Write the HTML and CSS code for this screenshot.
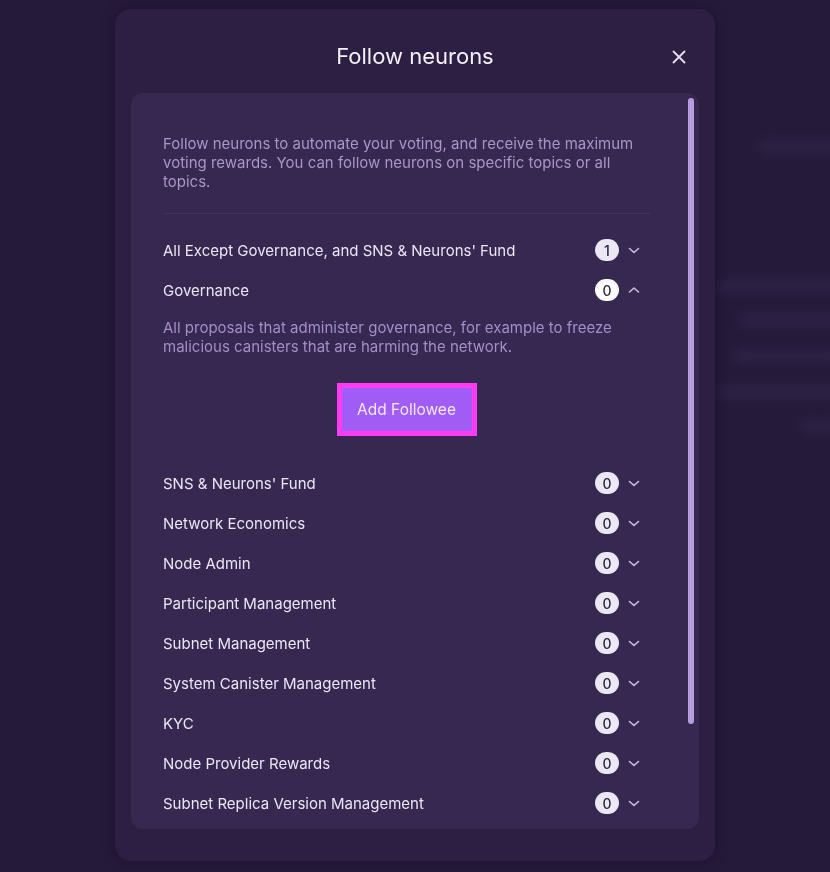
FILE: index.html
```html
<!DOCTYPE html>
<html lang="en">
<head>
<meta charset="utf-8">
<title>Follow neurons</title>
<link rel="stylesheet" href="styles.css">
</head>
<body>
<div class="backdrop" aria-hidden="true">
  <div class="ghost g1"></div>
  <div class="ghost g2"></div>
  <div class="ghost g3"></div>
  <div class="ghost g4"></div>
  <div class="ghost g5"></div>
  <div class="ghost g6"></div>
</div>
<div class="overlay">
  <section class="modal" role="dialog" aria-labelledby="modal-title">
    <header class="modal-head">
      <h2 id="modal-title" class="modal-title">Follow neurons</h2>
      <button class="close" aria-label="Close">
        <svg width="14" height="14" viewBox="0 0 14 14"><path d="M1.5 1.5 12.5 12.5M12.5 1.5 1.5 12.5" stroke="currentColor" stroke-width="1.8" stroke-linecap="round"/></svg>
      </button>
    </header>
    <div class="card">
      <div class="scroll-thumb" aria-hidden="true"></div>
      <p class="intro">Follow neurons to automate your voting, and receive the maximum voting rewards. You can follow neurons on specific topics or all topics.</p>
      <hr class="divider">
      <ul class="topics">
        <li class="topic">
          <div class="row"><span class="name">All Except Governance, and SNS &amp; Neurons' Fund</span><span class="badge">1</span><svg class="chev" width="20" height="20" viewBox="0 0 20 20"><path d="M5.5 8.5l4.5 4 4.5-4" fill="none" stroke="currentColor" stroke-width="1.6" stroke-linecap="round" stroke-linejoin="round"/></svg></div>
        </li>
        <li class="topic open">
          <div class="row"><span class="name">Governance</span><span class="badge active">0</span><svg class="chev" width="20" height="20" viewBox="0 0 20 20"><path d="M5.5 12l4.5-4 4.5 4" fill="none" stroke="currentColor" stroke-width="1.6" stroke-linecap="round" stroke-linejoin="round"/></svg></div>
          <p class="topic-desc">All proposals that administer governance, for example to freeze malicious canisters that are harming the network.</p>
          <div class="actions"><button class="primary">Add Followee</button></div>
        </li>
        <li class="topic">
          <div class="row"><span class="name">SNS &amp; Neurons' Fund</span><span class="badge">0</span><svg class="chev" width="20" height="20" viewBox="0 0 20 20"><path d="M5.5 8.5l4.5 4 4.5-4" fill="none" stroke="currentColor" stroke-width="1.6" stroke-linecap="round" stroke-linejoin="round"/></svg></div>
        </li>
        <li class="topic">
          <div class="row"><span class="name">Network Economics</span><span class="badge">0</span><svg class="chev" width="20" height="20" viewBox="0 0 20 20"><path d="M5.5 8.5l4.5 4 4.5-4" fill="none" stroke="currentColor" stroke-width="1.6" stroke-linecap="round" stroke-linejoin="round"/></svg></div>
        </li>
        <li class="topic">
          <div class="row"><span class="name">Node Admin</span><span class="badge">0</span><svg class="chev" width="20" height="20" viewBox="0 0 20 20"><path d="M5.5 8.5l4.5 4 4.5-4" fill="none" stroke="currentColor" stroke-width="1.6" stroke-linecap="round" stroke-linejoin="round"/></svg></div>
        </li>
        <li class="topic">
          <div class="row"><span class="name">Participant Management</span><span class="badge">0</span><svg class="chev" width="20" height="20" viewBox="0 0 20 20"><path d="M5.5 8.5l4.5 4 4.5-4" fill="none" stroke="currentColor" stroke-width="1.6" stroke-linecap="round" stroke-linejoin="round"/></svg></div>
        </li>
        <li class="topic">
          <div class="row"><span class="name">Subnet Management</span><span class="badge">0</span><svg class="chev" width="20" height="20" viewBox="0 0 20 20"><path d="M5.5 8.5l4.5 4 4.5-4" fill="none" stroke="currentColor" stroke-width="1.6" stroke-linecap="round" stroke-linejoin="round"/></svg></div>
        </li>
        <li class="topic">
          <div class="row"><span class="name">System Canister Management</span><span class="badge">0</span><svg class="chev" width="20" height="20" viewBox="0 0 20 20"><path d="M5.5 8.5l4.5 4 4.5-4" fill="none" stroke="currentColor" stroke-width="1.6" stroke-linecap="round" stroke-linejoin="round"/></svg></div>
        </li>
        <li class="topic">
          <div class="row"><span class="name">KYC</span><span class="badge">0</span><svg class="chev" width="20" height="20" viewBox="0 0 20 20"><path d="M5.5 8.5l4.5 4 4.5-4" fill="none" stroke="currentColor" stroke-width="1.6" stroke-linecap="round" stroke-linejoin="round"/></svg></div>
        </li>
        <li class="topic">
          <div class="row"><span class="name">Node Provider Rewards</span><span class="badge">0</span><svg class="chev" width="20" height="20" viewBox="0 0 20 20"><path d="M5.5 8.5l4.5 4 4.5-4" fill="none" stroke="currentColor" stroke-width="1.6" stroke-linecap="round" stroke-linejoin="round"/></svg></div>
        </li>
        <li class="topic">
          <div class="row"><span class="name">Subnet Replica Version Management</span><span class="badge">0</span><svg class="chev" width="20" height="20" viewBox="0 0 20 20"><path d="M5.5 8.5l4.5 4 4.5-4" fill="none" stroke="currentColor" stroke-width="1.6" stroke-linecap="round" stroke-linejoin="round"/></svg></div>
        </li>
      </ul>
    </div>
  </section>
</div>
</body>
</html>
```

FILE: styles.css
```css
* { box-sizing: border-box; }

html, body {
  margin: 0;
  height: 100%;
  overflow: hidden;
}

body {
  background: #251a3a;
  font-family: Inter, "Noto Sans", "Liberation Sans", sans-serif;
  color: #ebe6f3;
}

/* blurred page behind the dialog */
.backdrop {
  display: flex;
  flex-direction: column;
  align-items: flex-start;
  padding: 140px 0 0 0;
  filter: blur(6px);
  opacity: 0.35;
}
.ghost {
  height: 12px;
  border-radius: 6px;
  background: #45385f;
}
.g1 { margin-left: 758px; width: 90px; }
.g2 { margin-left: 717px; width: 130px; margin-top: 128px; }
.g3 { margin-left: 738px; width: 110px; margin-top: 22px; }
.g4 { margin-left: 733px; width: 110px; margin-top: 24px; }
.g5 { margin-left: 718px; width: 130px; margin-top: 24px; }
.g6 { margin-left: 800px; width: 40px; margin-top: 22px; }

.overlay {
  position: fixed;
  inset: 0;
  display: flex;
  justify-content: center;
  align-items: flex-start;
  padding: 9px 0 0 0;
}

.modal {
  width: 600px;
  height: 852px;
  background: #2d1f44;
  border-radius: 16px;
  display: flex;
  flex-direction: column;
  padding: 0 16px 32px;
  box-shadow: 0 0 12px rgba(20, 12, 34, 0.5);
}

.modal-head {
  display: grid;
  grid-template-columns: 1fr auto 1fr;
  align-items: center;
  padding: 34px 8px 23px;
}
.modal-title {
  grid-column: 2;
  margin: 0;
  font-size: 22px;
  line-height: 27px;
  font-weight: 400;
  color: #f4f1f8;
}
.close {
  grid-column: 3;
  justify-self: end;
  width: 24px;
  height: 24px;
  padding: 0;
  border: 0;
  background: none;
  color: #e4deee;
  display: flex;
  align-items: center;
  justify-content: center;
}

.card {
  position: relative;
  flex: 1;
  min-height: 0;
  background: #372851;
  border-radius: 12px;
  overflow: hidden;
  padding: 41px 49px 0 32px;
}
.scroll-thumb {
  position: absolute;
  top: 5px;
  right: 5px;
  width: 6px;
  height: 626px;
  border-radius: 3px;
  background: #b79ce0;
}

.intro {
  margin: 0;
  font-size: 15px;
  line-height: 19px;
  color: #a996c6;
}

.divider {
  margin: 22px 0 16px;
  border: 0;
  border-top: 1px solid #43345d;
}

.topics {
  list-style: none;
  margin: 0;
  padding: 0;
}

.row {
  height: 40px;
  display: flex;
  align-items: center;
  gap: 5px;
  padding-right: 6px;
}
.name {
  flex: 1;
  font-size: 15px;
  color: #ebe6f3;
}
.badge {
  width: 24px;
  height: 22px;
  border-radius: 11px;
  background: #ebe7f3;
  color: #2a1f3f;
  font-size: 14px;
  font-weight: 500;
  display: flex;
  align-items: center;
  justify-content: center;
}
.badge.active { background: #ffffff; }
.chev { color: #c9bfdd; }

.topic-desc {
  margin: 8px 0 0;
  font-size: 15px;
  line-height: 19px;
  color: #a38ec9;
}

.actions {
  display: flex;
  justify-content: center;
  padding: 32px 0;
}
.primary {
  width: 130px;
  height: 43px;
  border: 0;
  border-radius: 0;
  background: #a05cf5;
  color: #f1e8ff;
  font-family: inherit;
  font-size: 15.5px;
  outline: 5px solid #ff3cf2;
}
```
